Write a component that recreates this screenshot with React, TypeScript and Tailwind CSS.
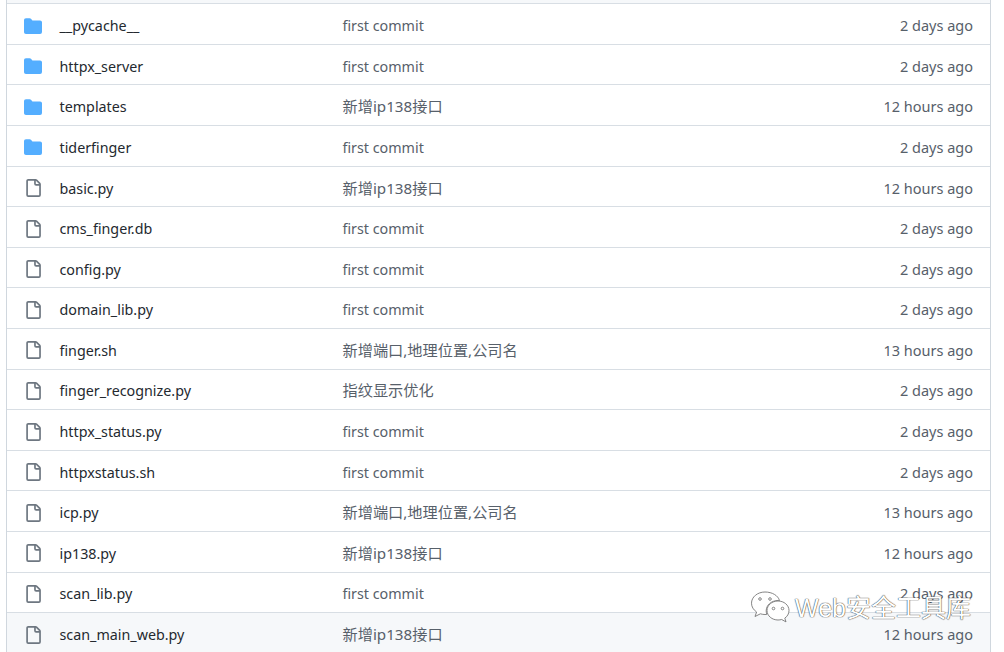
import React from 'react';

const FIRST = 'first commit';
const IP138 = '新增ip138接口';
const PORT = '新增端口,地理位置,公司名';

const rows = [
  { name: '__pycache__', dir: true, msg: FIRST, age: '2 days ago' },
  { name: 'httpx_server', dir: true, msg: FIRST, age: '2 days ago' },
  { name: 'templates', dir: true, msg: IP138, age: '12 hours ago' },
  { name: 'tiderfinger', dir: true, msg: FIRST, age: '2 days ago' },
  { name: 'basic.py', dir: false, msg: IP138, age: '12 hours ago' },
  { name: 'cms_finger.db', dir: false, msg: FIRST, age: '2 days ago' },
  { name: 'config.py', dir: false, msg: FIRST, age: '2 days ago' },
  { name: 'domain_lib.py', dir: false, msg: FIRST, age: '2 days ago' },
  { name: 'finger.sh', dir: false, msg: PORT, age: '13 hours ago' },
  { name: 'finger_recognize.py', dir: false, msg: '指纹显示优化', age: '2 days ago' },
  { name: 'httpx_status.py', dir: false, msg: FIRST, age: '2 days ago' },
  { name: 'httpxstatus.sh', dir: false, msg: FIRST, age: '2 days ago' },
  { name: 'icp.py', dir: false, msg: PORT, age: '13 hours ago' },
  { name: 'ip138.py', dir: false, msg: IP138, age: '12 hours ago' },
  { name: 'scan_lib.py', dir: false, msg: FIRST, age: '2 days ago' },
  { name: 'scan_main_web.py', dir: false, msg: IP138, age: '12 hours ago' },
];

const FolderIcon = () => (
  <svg viewBox="0 0 16 16" className="h-[18px] w-[18px] fill-[#54aeff]">
    <path d="M1.75 1A1.75 1.75 0 0 0 0 2.75v10.5C0 14.216.784 15 1.75 15h12.5A1.75 1.75 0 0 0 16 13.25v-8.5A1.75 1.75 0 0 0 14.25 3H7.5a.25.25 0 0 1-.2-.1l-.9-1.2C6.07 1.26 5.55 1 5 1H1.75Z" />
  </svg>
);

const FileIcon = () => (
  <svg viewBox="0 0 16 16" className="h-[18px] w-[18px] fill-[#6e7781]">
    <path d="M2 1.75C2 .784 2.784 0 3.75 0h6.586c.464 0 .909.184 1.237.513l2.914 2.914c.329.328.513.773.513 1.237v9.586A1.75 1.75 0 0 1 13.25 16h-9.5A1.75 1.75 0 0 1 2 14.25Zm1.75-.25a.25.25 0 0 0-.25.25v12.5c0 .138.112.25.25.25h9.5a.25.25 0 0 0 .25-.25V6h-2.75A1.75 1.75 0 0 1 9 4.25V1.5Zm6.75.062V4.25c0 .138.112.25.25.25h2.688l-.011-.013-2.914-2.914-.013-.011Z" />
  </svg>
);

const WeChat = () => (
  <svg viewBox="0 0 40 34" className="h-[34px] w-[40px] fill-white stroke-[#777777] stroke-[0.9]">
    <path d="M15 1C7.500 1 1.500 6 1.500 12.200c0 3.600 2 6.700 5.100 8.800L5 25.500l5.400-2.700c1.600.5 3 .7 4.600.7.6 0 1.200 0 1.800-.1-.4-1.200-.6-2.400-.6-3.600C16.200 14 21.500 9.500 28.200 9.500c.4 0 .9 0 1.300.1C28.200 4.600 22.200 1 15 1Z" />
    <path d="M39 19.500c0-5.300-5-9.500-11-9.500s-11 4.200-11 9.500 5 9.500 11 9.500c1.300 0 2.500-.2 3.700-.5l4.300 2.400-1.200-3.800C37.300 25.500 39 22.700 39 19.500Z" />
    <circle cx="10" cy="8" r="1.300" />
    <circle cx="20" cy="8" r="1.300" />
    <circle cx="23.500" cy="17.500" r="1.300" />
    <circle cx="32.500" cy="17.500" r="1.300" />
  </svg>
);

export default function App() {
  return (
    <div className="relative h-[652px] w-[1004px] overflow-hidden bg-white font-['Noto_Sans','Noto_Sans_CJK_SC',sans-serif] text-[14.3px] leading-[20px]">
      <div className="ml-[6px] mr-[13px] h-[660px] rounded-b-[6px] border-x border-[#d0d7de]">
        <div className="h-[4.3px] border-b border-[#d8dee4] bg-[#f6f8fa]" />
        {rows.map((row, i) => (
          <div
            key={row.name}
            className={`flex h-[40.6px] items-center border-b border-[#d8dee4] pl-[17px] pr-[17px] pt-[3.1px] ${i === 15 ? 'bg-[#f6f8fa]' : ''}`}
          >
            <div className="flex w-[35.500px] shrink-0 items-center">
              {row.dir ? <FolderIcon /> : <FileIcon />}
            </div>
            <div className="flex flex-1 items-baseline">
              <div className="w-[283px] shrink-0 text-[#24292f]">{row.name}</div>
              <div className={`min-w-0 flex-1 text-[#57606a] ${row.msg === FIRST ? '' : 'text-[15.2px]'}`}>{row.msg}</div>
              <div className="text-right text-[14.5px] text-[#57606a]">{row.age}</div>
            </div>
          </div>
        ))}
      </div>
      <div className="absolute left-[750px] top-[591px] flex items-center gap-[5px]">
        <WeChat />
        <span className="font-['Liberation_Sans','Noto_Sans_CJK_SC',sans-serif] text-[25px] leading-[34px] text-white [text-shadow:0_0_1px_#333,0_0_1px_#333]">
          Web安全工具库
        </span>
      </div>
    </div>
  );
}
